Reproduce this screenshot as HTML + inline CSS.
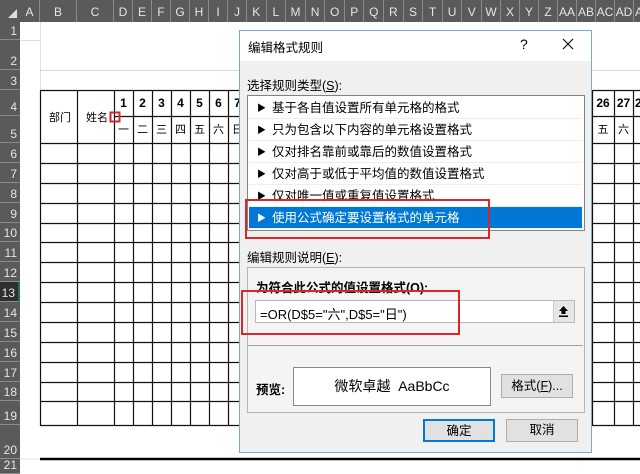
<!DOCTYPE html>
<html><head><meta charset="utf-8"><style>
*{margin:0;padding:0;box-sizing:border-box}
body{width:640px;height:474px;overflow:hidden;background:#fff;position:relative;font-family:"Liberation Sans","Microsoft YaHei","Noto Sans CJK SC",sans-serif;font-size:12px;color:#000}
.a{position:absolute;white-space:nowrap}
.ch{position:absolute;top:0;height:22px;line-height:24px;text-align:center;color:#e6e6e6;font-size:12px;border-right:1px solid #8a8a8a}
.rh{position:absolute;left:0;width:20px;text-align:right;padding-right:3px;color:#e6e6e6;font-size:12px;border-bottom:1px solid #8a8a8a;display:flex;align-items:flex-end;justify-content:flex-end;padding-bottom:1px}
.it{position:absolute;left:249px;width:333px;height:22px;line-height:22px;font-size:12.5px;padding-left:8px;border-bottom:1px solid #eee}
.it b{font-size:9px;font-weight:normal;display:inline-block;width:15px;vertical-align:1px}
.btn{position:absolute;background:#e1e1e1;border:1px solid #adadad;text-align:center;font-size:12.5px}
</style></head><body>
<div class="a" style="left:0;top:0;width:640px;height:22px;background:#5a5a5a"></div>
<div class="a" style="left:0;top:0;width:20px;height:474px;background:#5a5a5a"></div>
<div class="a" style="left:8px;top:9px;width:0;height:0;border-left:9px solid transparent;border-bottom:9px solid #ddd"></div>
<div id="cols"></div>
<div id="rows"></div>
<svg class="a" style="left:0;top:0" width="640" height="474">
<g stroke="#e0e0e0" stroke-width="1">
<line x1="20" y1="40.5" x2="40" y2="40.5"/><line x1="40.5" y1="22" x2="40.5" y2="90"/>
<line x1="40" y1="70.5" x2="640" y2="70.5" stroke="#d8d8d8"/>
<line x1="20" y1="459" x2="40" y2="459"/>
</g>
<g stroke="#111" stroke-width="1.2">
<line x1="40" y1="90.5" x2="640" y2="90.5"/>
<line x1="114" y1="116.5" x2="640" y2="116.5"/>
<line x1="40" y1="143.5" x2="640" y2="143.5"/>
<line x1="40" y1="163.5" x2="640" y2="163.5"/>
<line x1="40" y1="183.5" x2="640" y2="183.5"/>
<line x1="40" y1="203.5" x2="640" y2="203.5"/>
<line x1="40" y1="223.5" x2="640" y2="223.5"/>
<line x1="40" y1="242.5" x2="640" y2="242.5"/>
<line x1="40" y1="262.5" x2="640" y2="262.5"/>
<line x1="40" y1="282.5" x2="640" y2="282.5"/>
<line x1="40" y1="302.5" x2="640" y2="302.5"/>
<line x1="40" y1="322.5" x2="640" y2="322.5"/>
<line x1="40" y1="342.5" x2="640" y2="342.5"/>
<line x1="40" y1="362.5" x2="640" y2="362.5"/>
<line x1="40" y1="382.5" x2="640" y2="382.5"/>
<line x1="40" y1="401.5" x2="640" y2="401.5"/>
<line x1="40" y1="425.5" x2="640" y2="425.5"/>
<line x1="40.5" y1="90" x2="40.5" y2="426"/>
<line x1="77.5" y1="90" x2="77.5" y2="426"/>
<line x1="114.5" y1="90" x2="114.5" y2="426"/>
<line x1="133.5" y1="90" x2="133.5" y2="426"/>
<line x1="152.5" y1="90" x2="152.5" y2="426"/>
<line x1="171.5" y1="90" x2="171.5" y2="426"/>
<line x1="190.5" y1="90" x2="190.5" y2="426"/>
<line x1="209.5" y1="90" x2="209.5" y2="426"/>
<line x1="228.5" y1="90" x2="228.5" y2="426"/>
<line x1="592.5" y1="90" x2="592.5" y2="426"/>
<line x1="614.5" y1="90" x2="614.5" y2="426"/>
<line x1="633.5" y1="90" x2="633.5" y2="426"/>
</g>
<line x1="40" y1="459" x2="640" y2="459" stroke="#000" stroke-width="2.5"/>
<rect x="110.5" y="112.5" width="9" height="9" fill="none" stroke="#d9262b" stroke-width="2"/>
</svg>
<div class="a" style="left:49px;top:109px;font-size:11px">部门</div>
<div class="a" style="left:86px;top:109px;font-size:11px">姓名</div>
<div id="nums"></div>
<!-- dialog -->
<div class="a" style="left:239px;top:30px;width:353px;height:423px;background:#f0f0f0;border:1px solid #7aa7d6"></div>
<div class="a" style="left:240px;top:31px;width:351px;height:30px;background:#fff"></div>
<div class="a" style="left:248px;top:37px;font-size:12.5px">编辑格式规则</div>
<div class="a" style="left:520px;top:36px;font-size:14px">?</div>
<svg class="a" style="left:562px;top:38px" width="12" height="12"><path d="M1 1L11 11M11 1L1 11" stroke="#111" stroke-width="1.2"/></svg>
<div class="a" style="left:247px;top:75px;font-size:12.5px">选择规则类型(<u>S</u>):</div>
<div class="a" style="left:247px;top:95px;width:338px;height:136px;background:#fff;border:1px solid #828282"></div>
<div class="it" style="top:97px"><b>▶</b>基于各自值设置所有单元格的格式</div>
<div class="it" style="top:119px"><b>▶</b>只为包含以下内容的单元格设置格式</div>
<div class="it" style="top:141px"><b>▶</b>仅对排名靠前或靠后的数值设置格式</div>
<div class="it" style="top:163px"><b>▶</b>仅对高于或低于平均值的数值设置格式</div>
<div class="it" style="top:185px"><b>▶</b>仅对唯一值或重复值设置格式</div>
<div class="it" style="top:207px;background:#0078d7;color:#fff"><b>▶</b>使用公式确定要设置格式的单元格</div>
<div class="a" style="left:245px;top:199px;width:245px;height:40px;border:2px solid #d9262b"></div>
<div class="a" style="left:247px;top:247px;font-size:12.5px">编辑规则说明(<u>E</u>):</div>
<div class="a" style="left:247px;top:267px;width:338px;height:146px;background:#f4f4f4;border:1px solid #b5b5b5"></div>
<div class="a" style="left:256px;top:277px;font-size:12.5px;font-weight:bold">为符合此公式的值设置格式(O):</div>
<div class="a" style="left:255px;top:300px;width:320px;height:23px;background:#fff;border:1px solid #b9b9b9"></div>
<div class="a" style="left:260px;top:304px;font-size:13px">=OR(D$5="六",D$5="日")</div>
<div class="a" style="left:553px;top:301px;width:21px;height:21px;background:#e6e6e6;border-left:1px solid #ccc"></div>
<svg class="a" style="left:558px;top:305px" width="11" height="13"><path d="M5.5 1L1 6H3.5V9H7.5V6H10Z" fill="#000"/><rect x="1" y="10.5" width="9" height="1.5" fill="#000"/></svg>
<div class="a" style="left:241px;top:290px;width:219px;height:45px;border:2px solid #d9262b"></div>
<div class="a" style="left:248px;top:345px;width:335px;height:1px;background:#a0a0a0"></div>
<div class="a" style="left:256px;top:379px;font-size:12.5px;font-weight:bold">预览:</div>
<div class="a" style="left:293px;top:367px;width:198px;height:39px;background:#fff;border:1px solid #888;text-align:center;line-height:37px;font-size:14px">微软卓越&nbsp; AaBbCc</div>
<div class="btn" style="left:501px;top:374px;width:72px;height:24px;line-height:22px">格式(<u>F</u>)...</div>
<div class="btn" style="left:423px;top:419px;width:72px;height:23px;line-height:20px;border:2px solid #0078d7">确定</div>
<div class="btn" style="left:506px;top:419px;width:72px;height:23px;line-height:21px">取消</div>
<script>
var cols=[["A",20,40],["B",40,77],["C",77,114]],L="DEFGHIJ".split(""),x=114;
L.forEach(function(c){cols.push([c,x,x+19]);x+=19});
var more="KLMNOPQRSTUV".split("");var w=(482-x)/12;
more.forEach(function(c){cols.push([c,x,x+w]);x+=w});
["W","X","Y","Z","AA","AB","AC","AD","AE"].forEach(function(c){cols.push([c,x,x+19]);x+=19});
var h="";cols.forEach(function(c){h+='<div class="ch" style="left:'+c[1]+'px;width:'+(c[2]-c[1])+'px">'+c[0]+'</div>'});
document.getElementById("cols").innerHTML=h;
var rb=[22,40,70,90,116,143,163,183,203,223,242,262,282,302,322,342,362,382,401,425,459,474];
h="";for(var i=0;i<rb.length-1;i++){var s=i==12?"background:#2e2e2e;border-right:2px solid #217346;":"";h+='<div class="rh" style="top:'+rb[i]+'px;height:'+(rb[i+1]-rb[i])+'px;'+s+'">'+(i+1)+'</div>'}
document.getElementById("rows").innerHTML=h;
var wd="一二三四五六日";h="";
for(var k=0;k<7;k++){var l=114+19*k;h+='<div class="a" style="left:'+l+'px;top:96px;width:19px;text-align:center;font-weight:bold">'+(k+1)+'</div><div class="a" style="left:'+l+'px;top:121px;width:19px;text-align:center;font-size:11px">'+wd[k]+'</div>'}
h+='<div class="a" style="left:592px;top:96px;width:22px;text-align:center;font-weight:bold">26</div><div class="a" style="left:592px;top:121px;width:22px;text-align:center;font-size:11px">五</div>';
h+='<div class="a" style="left:614px;top:96px;width:19px;text-align:center;font-weight:bold">27</div><div class="a" style="left:614px;top:121px;width:19px;text-align:center;font-size:11px">六</div>';
h+='<div class="a" style="left:635px;top:96px;font-weight:bold">2</div>';
document.getElementById("nums").innerHTML=h;
</script>
</body></html>
